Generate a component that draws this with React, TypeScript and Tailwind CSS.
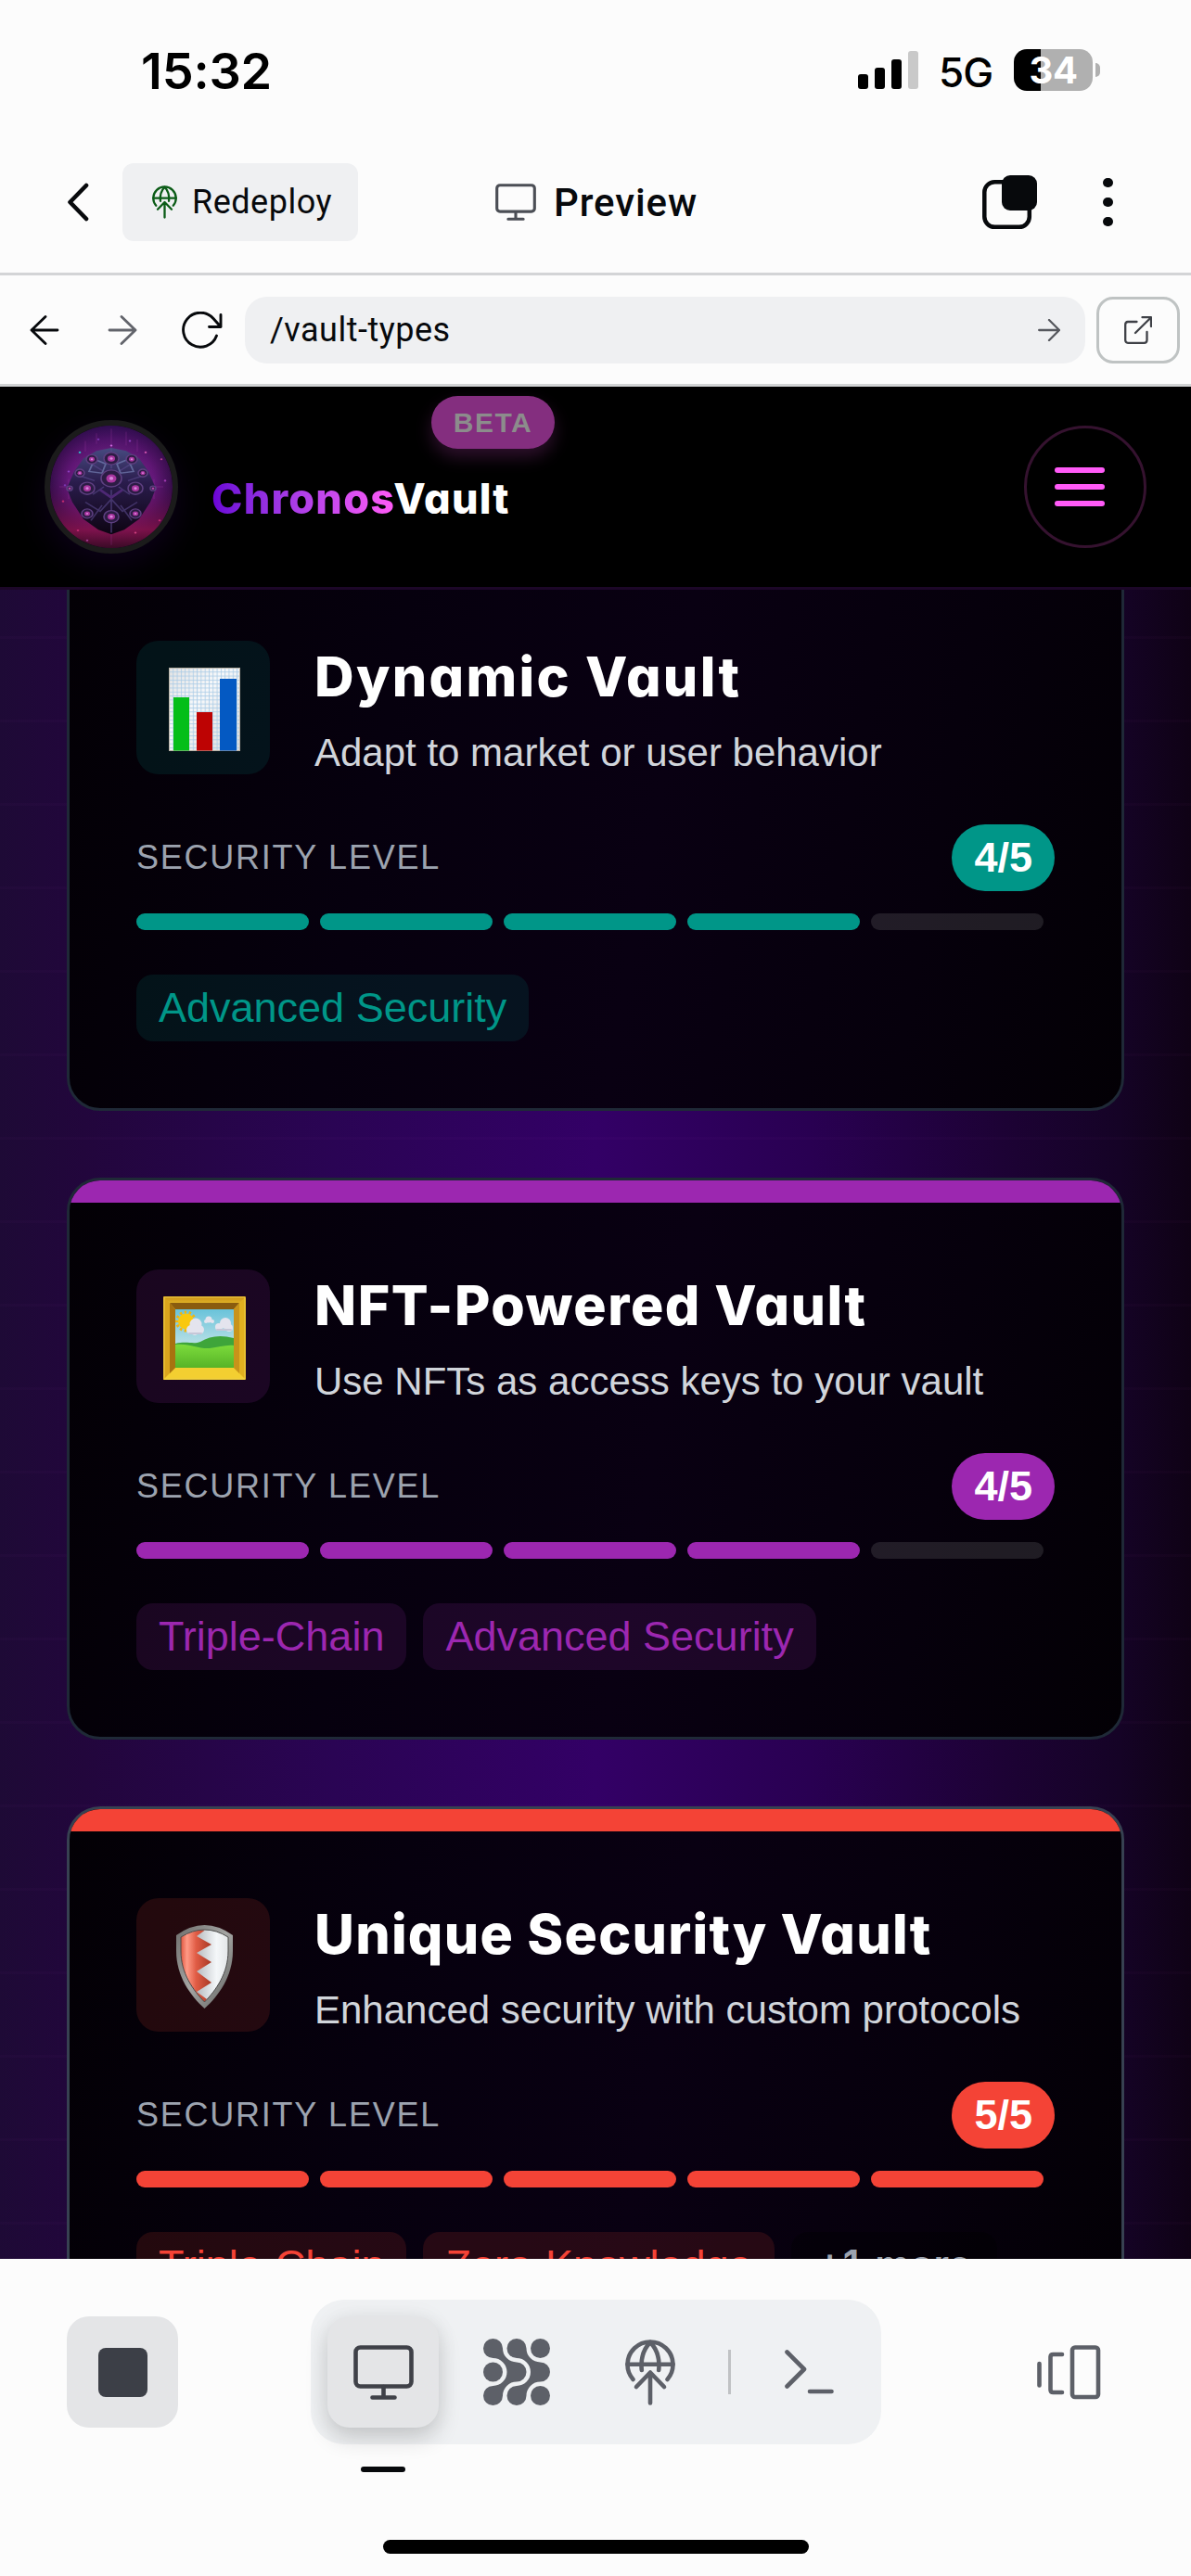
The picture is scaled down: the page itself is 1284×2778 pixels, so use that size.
import React from "react";

type Tone = "teal" | "purple" | "red";

const tones: Record<Tone, { solid: string; tint: string; text: string; border: string }> = {
  teal: { solid: "bg-[#009688]", tint: "bg-[#009688]/13", text: "text-[#009688]", border: "border-[#1f2937]" },
  purple: { solid: "bg-[#9c27b0]", tint: "bg-[#9c27b0]/15", text: "text-[#9c27b0]", border: "border-[#1f2937]" },
  red: { solid: "bg-[#f44336]", tint: "bg-[#f44336]/13", text: "text-[#f44336]", border: "border-[#374151]" },
};

function GlobeUp({ className }: { className: string }) {
  return (
    <svg viewBox="0 0 54 71" className={className} fill="none" stroke="currentColor" strokeWidth="4.6" strokeLinecap="round" strokeLinejoin="round">
      <path d="M8.5 43A24.5 24.5 0 1 1 45.5 43" />
      <path d="M2.5 26.7H51.5" />
      <path d="M27 3C20 10 16.500 20 17.800 33M27 3C34 10 37.500 20 36.200 33" />
      <path d="M27 68.500V36M12 51L27 35.500L42 51" />
    </svg>
  );
}

function Monitor({ className }: { className: string }) {
  return (
    <svg viewBox="0 0 65 59" className={className} fill="none" stroke="currentColor" strokeWidth="4.6" strokeLinecap="round">
      <rect x="2.500" y="2.500" width="60" height="42" rx="5" />
      <path d="M32.500 45V56M20.500 56.500H44.500" />
    </svg>
  );
}

function ChartEmoji() {
  return (
    <svg viewBox="0 0 77 90" className="h-[90px] w-[77px]">
      <defs>
        <pattern id="gridp" width="4.300" height="4.300" patternUnits="userSpaceOnUse">
          <path d="M0 .5H4.300M.5 0V4.300" stroke="#a9cbe6" strokeWidth=".8" fill="none" />
        </pattern>
        <linearGradient id="paper" x1="0" y1="0" x2="1" y2="1">
          <stop offset="0" stopColor="#e2e2e2" />
          <stop offset=".4" stopColor="#f6f8fa" />
          <stop offset="1" stopColor="#dcdcdc" />
        </linearGradient>
      </defs>
      <rect width="77" height="90" fill="url(#paper)" />
      <rect width="77" height="90" fill="url(#gridp)" />
      <rect x=".5" y=".5" width="76" height="89" fill="none" stroke="#b9b2a6" />
      <rect x="5" y="32" width="17" height="57.500" fill="#04be19" />
      <rect x="30" y="48" width="17" height="41.500" fill="#bd0303" />
      <rect x="55" y="12" width="18" height="77.500" fill="#0459c2" />
    </svg>
  );
}

function FrameEmoji() {
  return (
    <svg viewBox="0 0 89 90" className="h-[90px] w-[89px]">
      <defs>
        <linearGradient id="gold" x1="0" y1="0" x2="0" y2="1">
          <stop offset="0" stopColor="#c98f17" />
          <stop offset="1" stopColor="#f5d433" />
        </linearGradient>
        <linearGradient id="sky" x1="0" y1="0" x2="0" y2="1">
          <stop offset="0" stopColor="#69c3da" />
          <stop offset="1" stopColor="#eef3ee" />
        </linearGradient>
        <linearGradient id="grass" x1="0" y1="0" x2="0" y2="1">
          <stop offset="0" stopColor="#7ddc3c" />
          <stop offset="1" stopColor="#57b327" />
        </linearGradient>
      </defs>
      <rect width="89" height="90" rx="1.500" fill="#e0b01f" />
      <path d="M0 0L13 14V77L0 90Z" fill="#dba51d" />
      <path d="M0 90L13 77H76L89 90Z" fill="#f3cf31" />
      <path d="M0 0H89L76 14H13Z" fill="url(#gold)" />
      <path d="M7 7H82L76 14H13Z" fill="#8a5c0f" />
      <path d="M7 7L13 14V77L7 83Z" fill="#a8720f" />
      <path d="M82 7L76 14V77L82 83Z" fill="#c8931a" />
      <path d="M1 1H88V89H1Z" fill="none" stroke="#efcf45" strokeWidth="1" />
      <rect x="13" y="14" width="63" height="63" fill="url(#sky)" />
      <path d="M13 51C25 48 33 52 40 49C50 43 61 41 76 45V77H13Z" fill="#3ea53a" />
      <path d="M13 52C28 50 38 57 50 56C60 55 68 52 76 53V77H13Z" fill="url(#grass)" />
      <circle cx="24.500" cy="27" r="10" fill="none" stroke="#f3b50c" strokeWidth="3" strokeDasharray="2.500 2.500" />
      <circle cx="24.500" cy="27" r="8.500" fill="#f9c80e" />
      <g fill="#e4e4ee">
        <circle cx="30" cy="36" r="5" />
        <circle cx="35" cy="30" r="6.500" />
        <circle cx="39" cy="36" r="5" />
        <circle cx="34" cy="37" r="5" />
        <circle cx="49" cy="25" r="3.500" />
        <circle cx="46" cy="27" r="2" />
        <circle cx="53" cy="27" r="2" />
        <circle cx="60" cy="33" r="4" />
        <circle cx="67" cy="29" r="6" />
        <circle cx="71" cy="34" r="4" />
      </g>
      <path d="M58 36H73M28 40H41" stroke="#c6c7d8" strokeWidth="2" strokeLinecap="round" />
    </svg>
  );
}

function ShieldEmoji() {
  return (
    <svg viewBox="0 0 61 90" className="h-[90px] w-[61px]">
      <defs>
        <linearGradient id="sred" x1="0" y1="0" x2="1" y2="0">
          <stop offset="0" stopColor="#e0563f" />
          <stop offset=".2" stopColor="#ff9a86" />
          <stop offset=".5" stopColor="#e05c45" />
          <stop offset="1" stopColor="#a83824" />
        </linearGradient>
        <linearGradient id="swhite" x1="0" y1="0" x2="1" y2="0">
          <stop offset=".35" stopColor="#b9bec2" />
          <stop offset=".75" stopColor="#f4f7f9" />
          <stop offset="1" stopColor="#e3e6e8" />
        </linearGradient>
        <linearGradient id="steel" x1="0" y1="0" x2="1" y2="1">
          <stop offset="0" stopColor="#6e6e6c" />
          <stop offset=".5" stopColor="#a5a6a4" />
          <stop offset="1" stopColor="#5d5e5c" />
        </linearGradient>
      </defs>
      <path d="M0 11Q30.500 -11 61 11V28C61 55 46 76 30.500 90C15 76 0 55 0 28Z" fill="url(#steel)" />
      <path d="M5 13Q30.500 -3 56 13V28C56 52 43 70 30.500 83C18 70 5 52 5 28Z" fill="url(#swhite)" />
      <path d="M5 13Q17 5 31 5.500L22 12L38 21L22 30L38 40L22 50L38 62L22 72L33 80L30.500 83C18 70 5 52 5 28Z" fill="url(#sred)" />
      <path d="M5 13Q30.500 -3 56 13V28C56 52 43 70 30.500 83C18 70 5 52 5 28Z" fill="none" stroke="#4a4a49" strokeWidth="1" />
    </svg>
  );
}

const sparks = [
  [32, 35, "#2fb3c0"], [103, 35, "#c64fa8"], [120, 44, "#b03a8e"], [14, 99, "#c02a70"], [30, 137, "#c02a70"],
  [104, 148, "#d0407e"], [118, 124, "#c02a70"], [40, 150, "#a04090"], [86, 20, "#8d3fc0"], [52, 18, "#7a36b0"],
  [20, 60, "#8d3fc0"], [124, 72, "#a03ab0"], [66, 26, "#cc66dd"], [92, 140, "#d0407e"], [16, 78, "#7a36b0"],
] as const;

const domes = [
  [66, 43, 8], [45, 44, 6], [88, 44, 6], [66, 69, 11], [40, 82, 8], [92, 82, 8], [66, 119, 8],
  [40, 115, 6], [92, 115, 6], [32, 62, 5], [100, 62, 5], [21, 82, 3], [111, 82, 3],
] as const;

function LogoArt() {
  return (
    <svg viewBox="0 0 132 160" preserveAspectRatio="none" className="size-full">
      <defs>
        <radialGradient id="lbg" cx=".5" cy=".46" r=".58">
          <stop offset="0" stopColor="#9a3aa8" />
          <stop offset=".6" stopColor="#64187a" />
          <stop offset="1" stopColor="#1c0830" />
        </radialGradient>
        <linearGradient id="lfade" x1="0" y1="0" x2="0" y2="1">
          <stop offset="0" stopColor="#1c0a48" stopOpacity=".5" />
          <stop offset=".45" stopColor="#4a0a50" stopOpacity="0" />
          <stop offset=".85" stopColor="#8a1248" stopOpacity=".8" />
          <stop offset="1" stopColor="#3b0a24" stopOpacity=".9" />
        </linearGradient>
        <linearGradient id="orb" x1="0" y1="0" x2="0" y2="1">
          <stop offset="0" stopColor="#474a80" />
          <stop offset=".4" stopColor="#2a1c4c" />
          <stop offset="1" stopColor="#0d0412" />
        </linearGradient>
      </defs>
      <rect width="132" height="160" fill="url(#lbg)" />
      <rect width="132" height="160" fill="url(#lfade)" />
      <path d="M66 4V156M10 80H122M20 70V96M112 70V96M50 10V24M82 8V26M38 20V34M94 18V34" stroke="#b03fae" strokeWidth=".8" opacity=".4" />
      {sparks.map(([x, y, c]) => (
        <circle key={`${x}-${y}`} cx={x} cy={y} r="1.300" fill={c} />
      ))}
      <path d="M66 29L82 33L96 43L106 60L114 82L108 100L96 122L80 136L66 142L52 136L36 122L24 100L18 82L26 60L36 43L50 33Z" fill="url(#orb)" />
      <g fill="none" stroke="#5a4a8c" strokeWidth="1.800" opacity=".6">
        <path d="M66 30V56M66 84V140M42 48L58 60M90 48L74 60M28 64L48 72M104 64L84 72M46 90L58 80M86 90L74 80M38 100L54 112L66 96L78 112L94 100M44 124L56 104M88 124L76 104" />
        <path d="M48 44L60 50L56 62L42 60ZM84 44L72 50L76 62L90 60Z" stroke="#7f8cc0" />
      </g>
      {domes.map(([x, y, r]) => (
        <g key={`${x}-${y}`}>
          <circle cx={x} cy={y} r={r} fill="#2c1c44" stroke="#5d3f80" strokeWidth="1.600" />
          <circle cx={x} cy={y} r={r * 0.5} fill="#a8369f" />
          <circle cx={x} cy={y} r={r * 0.2} fill="#d986dd" />
        </g>
      ))}
      <path d="M54 84L66 94L78 84" stroke="#4d2874" strokeWidth="3" fill="none" />
    </svg>
  );
}

interface CardProps {
  tone: Tone;
  title: string;
  titleClass: string;
  text: string;
  level: number;
  tags: string[];
  more?: string;
  icon: React.ReactNode;
}

function VaultCard({ tone, title, titleClass, text, level, tags, more, icon }: CardProps) {
  const t = tones[tone];
  return (
    <article
      className={`h-[606px] shrink-0 overflow-hidden rounded-[36px] border-[3px] bg-[linear-gradient(100deg,#030005_0%,#06000e_30%,#090012_55%,#06000c_80%,#030005_100%)] ${t.border}`}
    >
      <div className={`h-6 ${t.solid}`} />
      <div className="p-[72px]">
        <div className="flex gap-12">
          <div className={`flex size-36 shrink-0 items-center justify-center rounded-3xl pt-[3px] pl-[3px] ${t.tint}`}>{icon}</div>
          <div>
            <h3 className={`font-[Inter,sans-serif] text-[59px] leading-[78px] font-extrabold whitespace-nowrap text-white [font-feature-settings:'cv11'] ${titleClass}`}>{title}</h3>
            <p className="mt-[13px] h-[59px] text-[42px] leading-[60px] whitespace-nowrap text-[#d1d5db]">{text}</p>
          </div>
        </div>
        <div className="mt-12 flex h-[72px] items-center justify-between">
          <span className="text-[36px] leading-[54px] tracking-[1.75px] text-[#9ca3af]">SECURITY LEVEL</span>
          <span className={`flex h-[72px] items-center rounded-full px-6 text-[45px] font-bold text-white ${t.solid}`}>{level}/5</span>
        </div>
        <div className="mt-6 flex gap-3 pr-3">
          {[1, 2, 3, 4, 5].map((n) => (
            <div key={n} className={`h-[18px] flex-1 rounded-full ${n <= level ? t.solid : "bg-white/11"}`} />
          ))}
        </div>
        <div className="mt-12 flex gap-[18px]">
          {tags.map((tag) => (
            <span key={tag} className={`flex h-[72px] items-center rounded-[18px] px-6 text-[45px] whitespace-nowrap ${t.tint} ${t.text}`}>
              {tag}
            </span>
          ))}
          {more && (
            <span className="flex h-[72px] items-center rounded-[18px] bg-black/30 px-7 pb-[3px] font-[Inter,sans-serif] text-[42px] font-semibold whitespace-nowrap text-[#9ca3af] [word-spacing:6px]">
              {more}
            </span>
          )}
        </div>
      </div>
    </article>
  );
}

export default function App() {
  return (
    <div className="flex h-[2778px] w-[1284px] flex-col overflow-hidden bg-[#fcfcfc] font-['Liberation_Sans',Arial,sans-serif] text-[#07090c]">
      {/* Status bar */}
      <div className="flex h-[150px] shrink-0 items-start justify-between pr-[98px] pl-[152px] font-[Inter,sans-serif] text-black">
        <div className="mt-[44px] text-[54px] leading-[66px] font-semibold tracking-[-0.2px]">15:32</div>
        <div className="flex items-start">
          <div className="mt-[55px] flex h-[41px] items-end gap-[7px]">
            <div className="h-4 w-[11px] rounded-[3px] bg-black" />
            <div className="h-[23px] w-[11px] rounded-[3px] bg-black" />
            <div className="h-8 w-[11px] rounded-[3px] bg-black" />
            <div className="h-[41px] w-[11px] rounded-[3px] bg-[#c9c9c9]" />
          </div>
          <div className="mt-[48px] ml-[22px] w-[60px] text-[44px] leading-[60px] font-medium tracking-[-1px]">5G</div>
          <div className="mt-[53px] ml-[21px] flex items-center">
            <div className="flex h-[45px] w-[85px] items-center justify-center rounded-[14px] bg-[linear-gradient(90deg,#000_29px,#b0b0b0_29px)] text-[40px] leading-[45px] font-bold tracking-[-0.5px] text-white">
              34
            </div>
            <div className="ml-[3px] h-[15px] w-[5px] rounded-r-full bg-[#b0b0b0]" />
          </div>
        </div>
      </div>

      {/* App header */}
      <div className="h-[147px] shrink-0 border-b-[3px] border-[#d3d4d6]">
        <div className="flex h-[136px] items-center pl-[72px] font-[Roboto,sans-serif]">
          <svg viewBox="0 0 24 42" className="h-[42px] w-6" fill="none" stroke="currentColor" strokeWidth="4.600" strokeLinecap="round" strokeLinejoin="round">
            <path d="M21 3L3.500 21L21 39" />
          </svg>
          <div className="ml-9 flex h-[84px] w-[254px] items-center rounded-xl bg-[#eff0f2] pl-8">
            <GlobeUp className="h-[36px] w-[27px] text-[#0b5c17]" />
            <span className="ml-[16px] text-[36px] tracking-[0.5px]">Redeploy</span>
          </div>
          <Monitor className="ml-[148px] h-[40px] w-11 text-[#4b4e55]" />
          <span className="ml-[19px] w-[155px] text-[42px] font-medium tracking-[0.9px]">Preview</span>
          <svg viewBox="0 0 60 60" className="ml-[306px] size-[60px]">
            <rect x="3.300" y="8.300" width="48.500" height="48.500" rx="11" fill="none" stroke="currentColor" strokeWidth="4.500" />
            <rect x="22" y="1" width="38" height="38" rx="9" fill="currentColor" />
          </svg>
          <div className="ml-[71px] flex flex-col gap-[10.500px]">
            <i className="size-[10.500px] rounded-full bg-[#07090c]" />
            <i className="size-[10.500px] rounded-full bg-[#07090c]" />
            <i className="size-[10.500px] rounded-full bg-[#07090c]" />
          </div>
        </div>
      </div>

      {/* Address bar */}
      <div className="flex h-[120px] shrink-0 items-center border-b-[3px] border-[#d1d3d4] pr-3 pl-[32px] font-[Roboto,sans-serif]">
        <svg viewBox="0 0 32 32" className="size-8" fill="none" stroke="currentColor" strokeWidth="2.800" strokeLinecap="round" strokeLinejoin="round">
          <path d="M30 16H2M17 1.500L2 16L17 30.500" />
        </svg>
        <svg viewBox="0 0 32 32" className="ml-[52px] size-8 text-[#62646b]" fill="none" stroke="currentColor" strokeWidth="2.800" strokeLinecap="round" strokeLinejoin="round">
          <path d="M2 16H30M15 1.500L30 16L15 30.500" />
        </svg>
        <svg viewBox="0 0 45 40" className="ml-[48px] h-[40px] w-[45px]" fill="none" stroke="currentColor" strokeWidth="2.900" strokeLinecap="round" strokeLinejoin="round">
          <path d="M42 3.500V16.500H29.500M42 16.500L34 7.500A18.500 18.500 0 1 0 37.500 26" />
        </svg>
        <div className="ml-[23px] flex h-[72px] w-[906px] items-center justify-between rounded-3xl bg-[#eff0f2] px-[27px]">
          <span className="text-[36px] tracking-[0.5px]">/vault-types</span>
          <svg viewBox="0 0 24 24" className="size-6 text-[#56585e]" fill="none" stroke="currentColor" strokeWidth="2.300" strokeLinecap="round" strokeLinejoin="round">
            <path d="M1.200 12H23M12 1L23 12L12 23" />
          </svg>
        </div>
        <div className="ml-3 flex h-[72px] w-[90px] items-center justify-center rounded-[18px] border-[3px] border-[#bfc3c3]">
          <svg viewBox="0 0 30 30" className="size-[30px] text-[#3f4147]" fill="none" stroke="currentColor" strokeWidth="2.300" strokeLinecap="round" strokeLinejoin="round">
            <path d="M13.500 6H4A3 3 0 0 0 1.200 9V26A3 3 0 0 0 4 28.800H21.500A3 3 0 0 0 24.500 26V17M12 18L29 1.200M19.500 1.200H29V11" />
          </svg>
        </div>
      </div>

      {/* Site header */}
      <header className="flex h-[219px] shrink-0 items-center border-b-[3px] border-[#1c0728] bg-black px-12">
        <div className="size-36 overflow-hidden rounded-full border-[6px] border-[#1b1b1b] shadow-[0_12px_36px_rgba(107,0,215,0.12)]">
          <LogoArt />
        </div>
        <div className="relative mt-[26px] ml-9 font-[Inter,sans-serif] text-[45px] leading-[60px] font-extrabold tracking-[1.2px] whitespace-nowrap [font-feature-settings:'cv11']">
          <span className="bg-linear-to-r from-[#6b00d7] to-[#ff5af7] bg-clip-text text-transparent">Chronos</span>
          <span className="text-white">Vault</span>
          <span className="absolute -top-[81px] left-[237px] flex h-[57px] w-[133px] items-center justify-center rounded-full bg-[#842e7f] font-['Liberation_Sans',Arial,sans-serif] text-[30px] font-bold tracking-[1.500px] text-[#8c8c8c] shadow-[0_9px_18px_rgba(132,46,127,0.35)] [font-feature-settings:normal]">
            BETA
          </span>
        </div>
        <div className="ml-auto flex size-[132px] flex-col justify-center gap-3 rounded-full border-[3px] border-[#35122f] pl-[30px]">
          <i className="h-1.5 w-[54px] rounded-full bg-[#ff5af7]" />
          <i className="h-1.5 w-[54px] rounded-full bg-[#ff5af7]" />
          <i className="h-1.5 w-[54px] rounded-full bg-[#ff5af7]" />
        </div>
      </header>

      {/* Vault list */}
      <main className="h-[1800px] shrink-0 overflow-hidden bg-[repeating-linear-gradient(180deg,transparent_0px,transparent_50px,rgba(255,90,247,0.018)_50px,rgba(255,90,247,0.018)_53px,transparent_53px,transparent_90px),linear-gradient(90deg,#1e0a36_0%,#22063c_7%,#2a0454_28%,#330066_50%,#290052_68%,#1d0235_84%,#150326_94%,#0f0215_100%)] px-[72px]">
        <div className="-mt-11 flex flex-col gap-[72px]">
          <VaultCard tone="teal" title="Dynamic Vault" titleClass="tracking-[2.3px]" text="Adapt to market or user behavior" level={4} tags={["Advanced Security"]} icon={<ChartEmoji />} />
          <VaultCard tone="purple" title="NFT-Powered Vault" titleClass="tracking-[1.5px]" text="Use NFTs as access keys to your vault" level={4} tags={["Triple-Chain", "Advanced Security"]} icon={<FrameEmoji />} />
          <VaultCard tone="red" title="Unique Security Vault" titleClass="tracking-[1.25px]" text="Enhanced security with custom protocols" level={5} tags={["Triple-Chain", "Zero-Knowledge"]} more="+1 more" icon={<ShieldEmoji />} />
        </div>
      </main>

      {/* Bottom toolbar */}
      <footer className="flex grow flex-col">
        <div className="mt-11 flex h-[156px] items-center pl-[72px] text-[#5d6068]">
          <div className="flex size-[120px] items-center justify-center rounded-3xl bg-[#e4e5e7]">
            <div className="size-[53px] rounded-lg bg-[#3c3f47]" />
          </div>
          <div className="ml-[143px] flex h-[156px] w-[615px] items-center gap-6 rounded-[36px] bg-[#eff1f3] px-[18px]">
            <div className="flex size-[120px] items-center justify-center rounded-3xl bg-[#e4e5e7] text-[#3f4148] shadow-[0_12px_24px_rgba(0,0,0,0.16),0_0_24px_rgba(0,0,0,0.05)]">
              <Monitor className="h-[59px] w-[65px]" />
            </div>
            <div className="flex size-[120px] items-center justify-center">
              <svg viewBox="0 0 72 72" className="size-[72px]" fill="currentColor">
                <path d="M21 10.500A15 15 0 0 0 36 25.500A10.500 10.500 0 0 1 36 46.500A15 15 0 0 0 21 61.500A10.500 10.500 0 1 1 10.500 51A15 15 0 0 0 10.500 21A10.500 10.500 0 1 1 21 10.500Z" />
                <path transform="translate(25.500 0)" d="M21 10.500A15 15 0 0 0 36 25.500A10.500 10.500 0 0 1 36 46.500A15 15 0 0 0 21 61.500A10.500 10.500 0 1 1 10.500 51A15 15 0 0 0 10.500 21A10.500 10.500 0 1 1 21 10.500Z" />
                <circle cx="10.500" cy="36" r="10.500" />
                <circle cx="61.500" cy="10.500" r="10.500" />
                <circle cx="61.500" cy="61.500" r="10.500" />
              </svg>
            </div>
            <div className="flex size-[120px] items-center justify-center">
              <GlobeUp className="h-[71px] w-[54px]" />
            </div>
            <div className="h-12 w-[3px] bg-[#c0c2c4]" />
            <div className="flex size-[120px] items-center justify-center">
              <svg viewBox="0 0 53 48" className="h-12 w-[53px]" fill="none" stroke="currentColor" strokeWidth="4.600" strokeLinecap="round" strokeLinejoin="round">
                <path d="M2.500 2.500L21 21L2.500 39.500M27 45H50.500" />
              </svg>
            </div>
          </div>
          <svg viewBox="0 0 69 59" className="ml-[168px] h-[59px] w-[69px]" fill="none" stroke="currentColor" strokeWidth="4.600" strokeLinecap="round" strokeLinejoin="round">
            <path d="M2.500 20V43.500M27 10H17.500Q14.500 10 14.500 13V48Q14.500 51 17.500 51H27" />
            <rect x="38" y="2.500" width="28" height="53.500" rx="3" />
          </svg>
        </div>
        <div className="mt-6 ml-[389px] h-1.5 w-12 rounded-full bg-[#07090c]" />
        <div className="mt-[73px] ml-[413px] h-[15px] w-[459px] rounded-full bg-black" />
      </footer>
    </div>
  );
}
